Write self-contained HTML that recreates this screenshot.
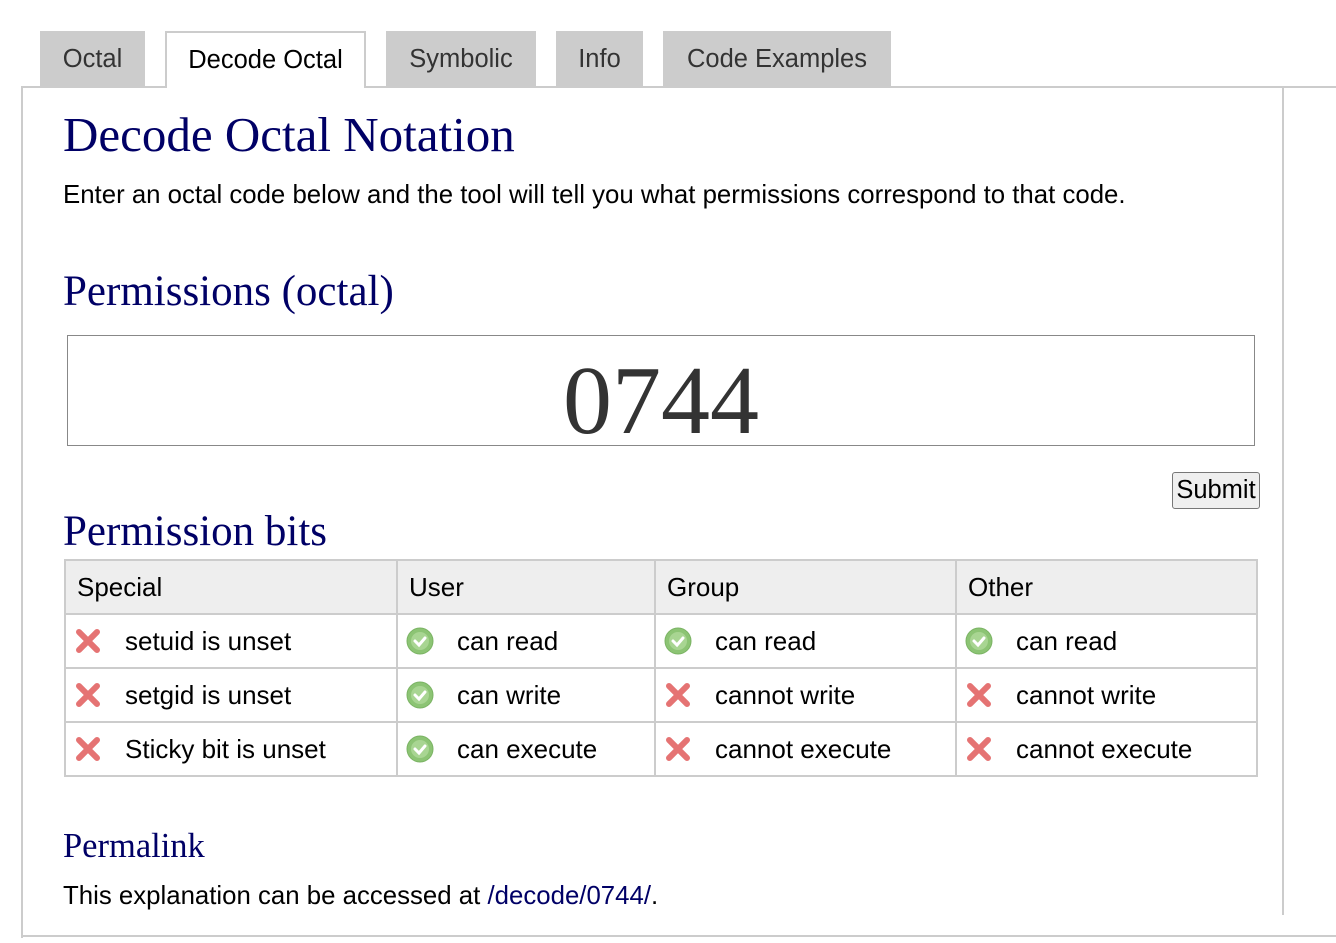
<!DOCTYPE html>
<html><head><meta charset="utf-8"><style>
*{margin:0;padding:0;box-sizing:border-box}
body{width:1336px;height:943px;background:#fff;position:relative;overflow:hidden;font-family:"Liberation Sans",Arial,sans-serif;color:#000}
.a{position:absolute}
.tab{position:absolute;top:31px;height:56px;background:#ccc;font-size:25.5px;color:#333;text-align:center;line-height:56px;white-space:nowrap}
.act{background:#fff;border:2px solid #ccc;border-bottom:none;color:#000;height:57px;line-height:54px}
.s{font-family:"Liberation Serif",Georgia,serif;color:#000066;position:absolute;white-space:nowrap}
table{position:absolute;left:64px;top:559px;width:1194px;border-collapse:collapse;font-size:26px}
td{border:2px solid #ccc;height:54px;padding:0 0 0 8px;vertical-align:middle;white-space:nowrap}
tr.h td{background:#eee;padding-left:11px}
.ic{display:inline-block;width:28px;height:28px;vertical-align:middle;margin-right:23px;margin-top:-4px}
</style></head><body>
<div class="a" style="left:21px;top:86px;width:1315px;height:2px;background:#ccc"></div>
<div class="a" style="left:21px;top:86px;width:2px;height:852px;background:#ccc"></div>
<div class="a" style="left:1282px;top:86px;width:2px;height:829px;background:#ccc"></div>
<div class="a" style="left:21px;top:935px;width:1315px;height:2px;background:#ccc"></div>
<div class="tab" style="left:40px;width:105px">Octal</div>
<div class="tab act" style="left:165px;width:201px">Decode Octal</div>
<div class="tab" style="left:386px;width:150px">Symbolic</div>
<div class="tab" style="left:556px;width:87px">Info</div>
<div class="tab" style="left:663px;width:228px">Code Examples</div>
<div class="s" style="left:63px;top:106px;font-size:49px;line-height:58px">Decode Octal Notation</div>
<div class="a" style="left:63px;top:180px;font-size:25.8px;line-height:30px;white-space:nowrap">Enter an octal code below and the tool will tell you what permissions correspond to that code.</div>
<div class="s" style="left:63px;top:267px;font-size:43px;line-height:50px">Permissions (octal)</div>
<div class="a" style="left:67px;top:335px;width:1188px;height:111px;border:1px solid #888;text-align:center;font-family:'Liberation Serif',Georgia,serif;font-size:98px;line-height:130px;color:#333">0744</div>
<div class="a" style="left:1172px;top:472px;width:88px;height:37px;border:1px solid #777;border-radius:3px;background:#efefef;font-size:25.5px;line-height:34px;text-align:center">Submit</div>
<div class="s" style="left:63px;top:507px;font-size:43px;line-height:50px">Permission bits</div>
<svg width="0" height="0" style="position:absolute"><defs>
<symbol id="x" viewBox="0 0 28 28"><path d="M5 5L23 23M23 5L5 23" stroke="#e57373" stroke-width="6" stroke-linecap="round"/></symbol>
<symbol id="c" viewBox="0 0 28 28"><circle cx="14" cy="14" r="13" fill="#8cc474" stroke="#7ab363"/><circle cx="14" cy="14" r="9" fill="#a8d592"/><path d="M9 14l4 4 6-7" stroke="#fff" stroke-width="3" fill="none" stroke-linecap="round"/></symbol>
</defs></svg>
<table>
<tr class="h"><td style="width:332px">Special</td><td style="width:258px">User</td><td style="width:301px">Group</td><td>Other</td></tr>
<tr><td><svg class="ic"><use href="#x"/></svg>setuid is unset</td><td><svg class="ic"><use href="#c"/></svg>can read</td><td><svg class="ic"><use href="#c"/></svg>can read</td><td><svg class="ic"><use href="#c"/></svg>can read</td></tr>
<tr><td><svg class="ic"><use href="#x"/></svg>setgid is unset</td><td><svg class="ic"><use href="#c"/></svg>can write</td><td><svg class="ic"><use href="#x"/></svg>cannot write</td><td><svg class="ic"><use href="#x"/></svg>cannot write</td></tr>
<tr><td><svg class="ic"><use href="#x"/></svg>Sticky bit is unset</td><td><svg class="ic"><use href="#c"/></svg>can execute</td><td><svg class="ic"><use href="#x"/></svg>cannot execute</td><td><svg class="ic"><use href="#x"/></svg>cannot execute</td></tr>
</table>
<div class="s" style="left:63px;top:825px;font-size:34.5px;line-height:42px">Permalink</div>
<div class="a" style="left:63px;top:881px;font-size:25.8px;line-height:30px;white-space:nowrap">This explanation can be accessed at <span style="color:#000066">/decode/0744/</span>.</div>
</body></html>
